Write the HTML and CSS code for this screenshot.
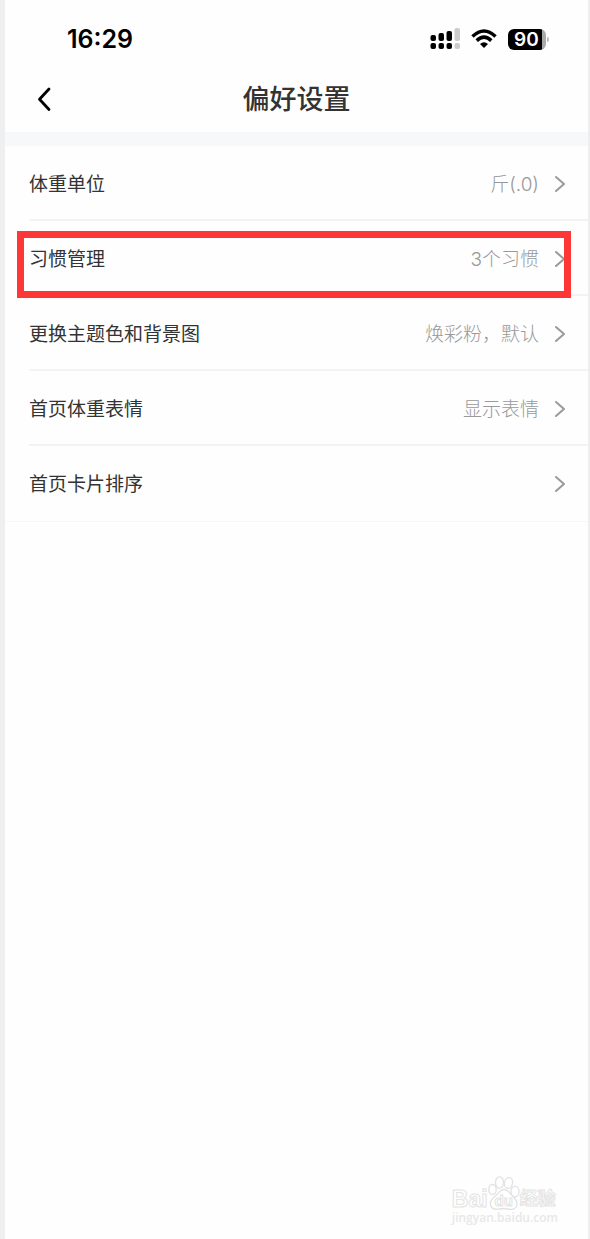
FILE: index.html
```html
<!DOCTYPE html>
<html lang="zh-CN">
<head>
<meta charset="utf-8">
<meta name="viewport" content="width=device-width, initial-scale=1">
<title>偏好设置</title>
<link rel="stylesheet" href="styles.css">
</head>
<body>
<div class="screen">
  <div class="status">
    <span class="time">16:29</span>
    <div class="indicators">
      <svg class="signal" width="30" height="22" viewBox="0 0 30 22" aria-hidden="true">
        <g fill="#000"><rect x="0.500" y="7" width="5.500" height="6" rx="2"/><rect x="8.500" y="5" width="5.500" height="8" rx="2"/><rect x="16.500" y="3" width="5.500" height="10" rx="2"/><rect x="0.500" y="15" width="5.500" height="6" rx="2"/><rect x="8.500" y="15" width="5.500" height="6" rx="2"/><rect x="16.500" y="15" width="5.500" height="6" rx="2"/></g>
        <g fill="#ccc"><rect x="24.500" y="0" width="5.500" height="13" rx="2"/><rect x="24.500" y="15" width="5.500" height="6" rx="2"/></g>
      </svg>
      <svg class="wifi" width="26" height="20" viewBox="0 0 26 20" aria-hidden="true">
        <g fill="none" stroke="#000" stroke-width="3.500"><path d="M1.500 7.500Q13-3.500 24.500 7.500"/><path d="M5.700 11.600Q13 4.800 20.300 11.600"/></g>
        <path d="M9 15Q13 11.400 17 15L13 19Z"/>
      </svg>
      <div class="power"><span class="battery">90</span><span class="tip"></span></div>
    </div>
  </div>
  <header class="bar">
    <button class="back" type="button" aria-label="返回">
      <svg width="16" height="26" viewBox="0 0 16 26" aria-hidden="true"><path d="M13 3L3.500 13.200L13 23.500" fill="none" stroke="#000" stroke-width="2.800" stroke-linecap="round" stroke-linejoin="round"/></svg>
    </button>
    <h1 class="title">偏好设置</h1>
  </header>
  <main class="list">
    <a class="row" href="#unit"><span class="label">体重单位</span><span class="value">斤(.0)</span><svg class="chevron" width="12" height="18" viewBox="0 0 12 18" aria-hidden="true"><path d="M2 2L10 9L2 16"/></svg></a>
    <a class="row marked" href="#habits"><span class="label">习惯管理</span><span class="value">3个习惯</span><svg class="chevron" width="12" height="18" viewBox="0 0 12 18" aria-hidden="true"><path d="M2 2L10 9L2 16"/></svg></a>
    <a class="row" href="#theme"><span class="label">更换主题色和背景图</span><span class="value">焕彩粉，默认</span><svg class="chevron" width="12" height="18" viewBox="0 0 12 18" aria-hidden="true"><path d="M2 2L10 9L2 16"/></svg></a>
    <a class="row" href="#mood"><span class="label">首页体重表情</span><span class="value">显示表情</span><svg class="chevron" width="12" height="18" viewBox="0 0 12 18" aria-hidden="true"><path d="M2 2L10 9L2 16"/></svg></a>
    <a class="row" href="#cards"><span class="label">首页卡片排序</span><span class="value"></span><svg class="chevron" width="12" height="18" viewBox="0 0 12 18" aria-hidden="true"><path d="M2 2L10 9L2 16"/></svg></a>
  </main>
  <div class="watermark">
    <div class="brand">
      <span class="bai">Bai</span>
      <span class="paw">
        <svg width="32" height="34" viewBox="0 0 32 34" aria-hidden="true"><g fill="#fff" stroke="#e2e2e2" stroke-width="1.300"><ellipse cx="11.500" cy="6.500" rx="4" ry="5.700"/><ellipse cx="20.500" cy="7" rx="4" ry="5.500" transform="rotate(12 20.500 7)"/><ellipse cx="4.500" cy="13.500" rx="3.700" ry="5"/><ellipse cx="27" cy="15.500" rx="4" ry="5.300"/><path d="M16 13.500C12 13.500 11 17 8 19.500C4 22.500 1.500 25 2.500 29C3.500 33.500 7.500 33.500 11 33Q16 32 20 33C25 34 28.500 32.500 29 28.500C29.500 24.500 27 22.500 24 19.500C21 16.500 20 13.500 16 13.500Z"/></g></svg>
        <span class="du">du</span>
      </span>
      <span class="jingyan">经验</span>
    </div>
    <div class="site">jingyan.baidu.com</div>
  </div>
</div>
</body>
</html>
```

FILE: styles.css
```css
*, *::after { box-sizing: border-box; }
body {
  margin: 0;
  background: #fefefe;
  color: #333;
  font-family: "Liberation Sans", "Noto Sans CJK SC", sans-serif;
}
.screen {
  position: relative;
  min-height: 100vh;
  border-left: 5px solid #efefef;
  border-right: 2px solid #efefef;
}
.status {
  display: flex;
  align-items: center;
  justify-content: space-between;
  height: 66px;
  padding: 12px 39px 0 62px;
}
.time {
  color: #000;
  font: 600 25px/30px Inter, sans-serif;
}
.indicators { display: flex; align-items: center; gap: 11px; }
.power { display: flex; align-items: center; gap: 1px; }
.battery {
  width: 38px;
  border-radius: 6px;
  background: linear-gradient(90deg, #000 34px, #aaa 34px);
  color: #fff;
  font: 600 19px/21px Inter, sans-serif;
  padding-left: 6px;
}
.tip { width: 2px; height: 5px; border-radius: 0 2px 2px 0; background: #bbb; }
.bar {
  display: grid;
  grid-template-columns: 56px 1fr 56px;
  align-items: center;
  height: 66px;
}
.back {
  display: flex;
  justify-content: flex-end;
  padding: 0 9px 0 0;
  border: 0;
  background: none;
}
.title {
  margin: 0;
  padding-top: 2px;
  color: #333;
  font-size: 27px;
  font-weight: 500;
  line-height: 36px;
  text-align: center;
}
.list {
  border-top: 14px solid #f7f8fa;
  border-bottom: 1px solid #f7f7f7;
}
.row {
  position: relative;
  display: flex;
  align-items: center;
  height: 75px;
  margin-left: 24px;
  padding: 2px 22px 0 0;
  border-bottom: 2px solid #f3f3f3;
  color: #333;
  font-size: 19px;
  line-height: 28px;
  text-decoration: none;
}
.row:last-child { padding-top: 0; border-bottom: 0; }
.label, .value { padding-top: 2px; }
.value {
  flex: 1;
  margin-right: 15px;
  color: #999;
  font-family: Inter, "Noto Sans CJK SC", sans-serif;
  font-weight: 300;
  text-align: right;
}
.chevron { fill: none; stroke: #999; stroke-width: 2; stroke-linecap: round; stroke-linejoin: round; }
.marked::after {
  content: "";
  position: absolute;
  top: 10px;
  right: 17px;
  left: -12px;
  height: 67px;
  border: 7px solid #fd3636;
  z-index: 1;
}
.watermark {
  position: absolute;
  right: 30px;
  bottom: 13px;
  color: #fff;
  -webkit-text-stroke: 1px #e4e4e4;
}
.brand { display: flex; align-items: flex-end; }
.bai { font: 700 23px/22px "Liberation Sans", sans-serif; }
.paw { position: relative; display: flex; }
.du {
  position: absolute;
  right: 0;
  bottom: 1px;
  left: 0;
  font: 700 15px/16px "Liberation Sans", sans-serif;
  text-align: center;
}
.jingyan { font-size: 18px; font-weight: 700; line-height: 22px; }
.site {
  color: #e8e8e8;
  font: 600 12px/16px "Open Sans", sans-serif;
  -webkit-text-stroke: 0;
}
```
